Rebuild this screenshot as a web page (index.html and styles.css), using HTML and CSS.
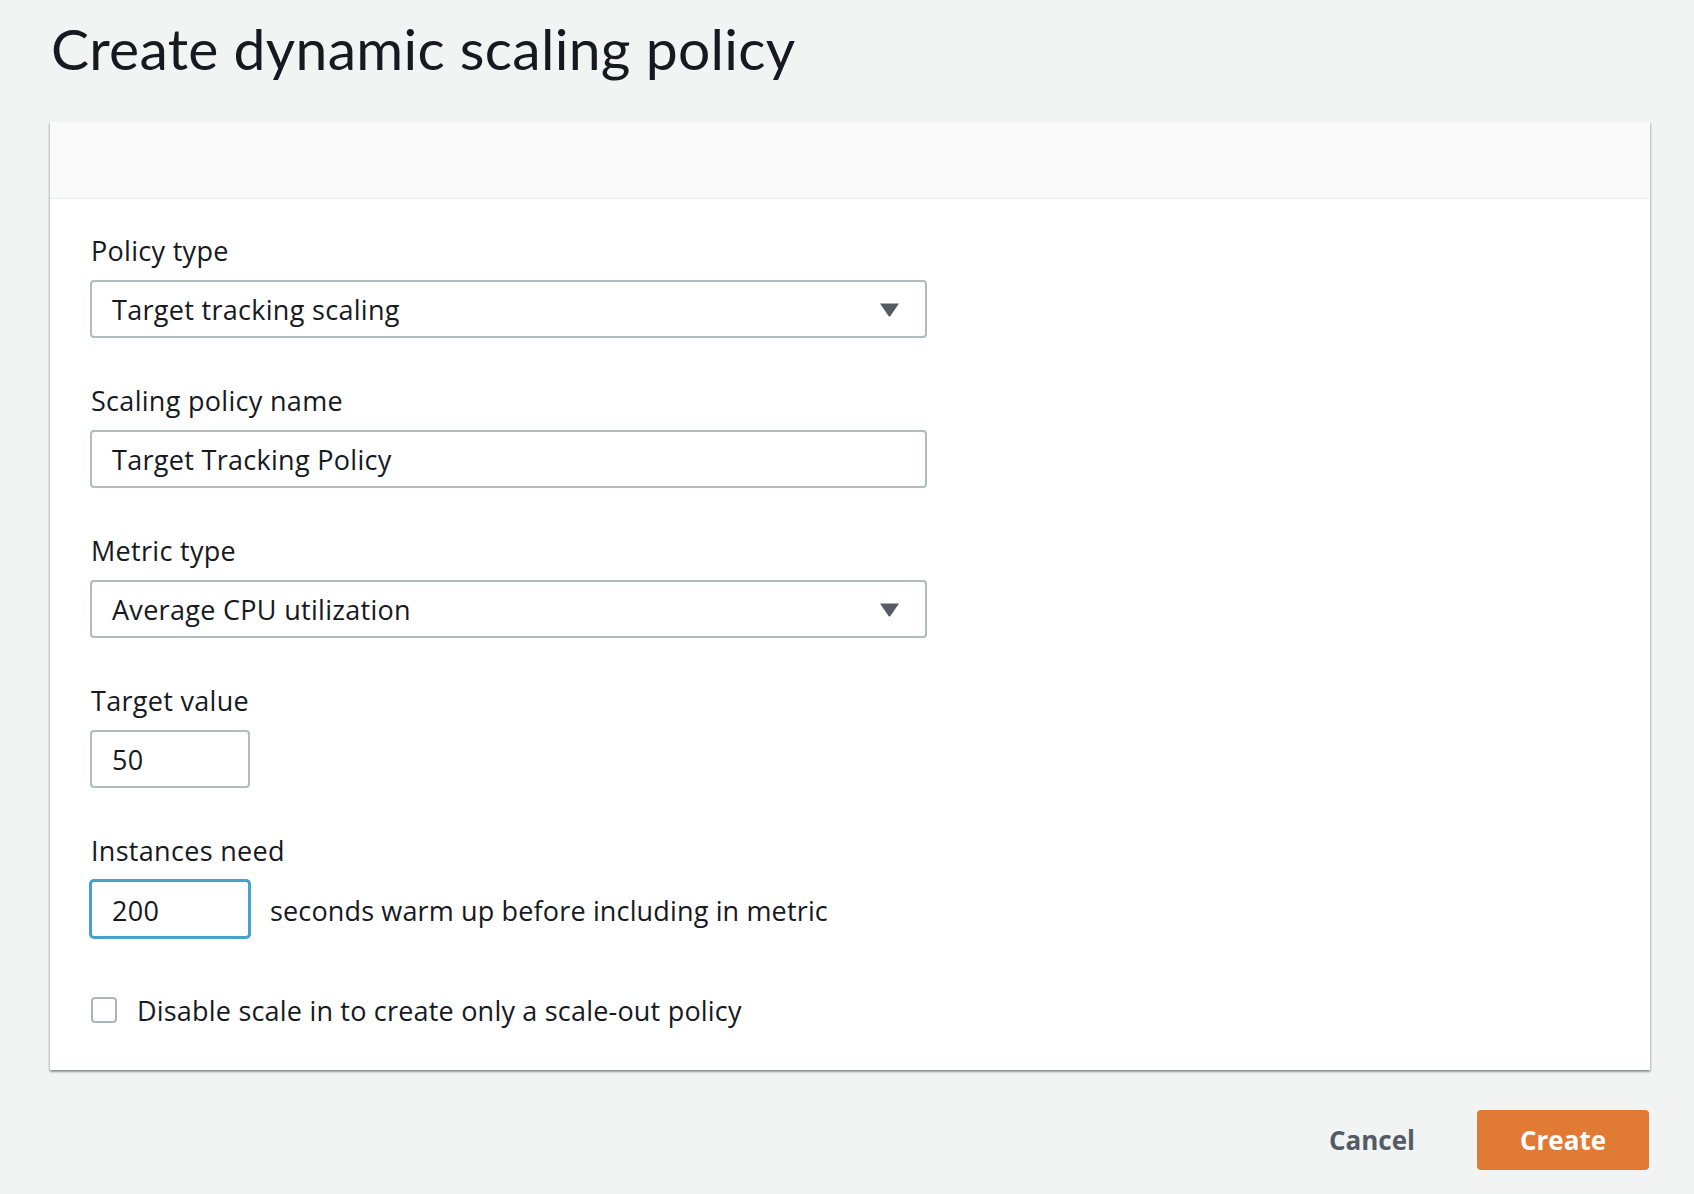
FILE: index.html
```html
<!DOCTYPE html>
<html lang="en">
<head>
<meta charset="utf-8">
<title>Create dynamic scaling policy</title>
<link rel="stylesheet" href="styles.css">
</head>
<body>
<main class="page">
  <h1 class="title">Create dynamic scaling policy</h1>
  <section class="card">
    <div class="card-header"></div>
    <div class="card-body">
      <div class="field">
        <div class="label">Policy type</div>
        <div class="control select">
          <span class="value">Target tracking scaling</span>
          <svg class="caret" width="21" height="15" viewBox="0 0 21 15"><path d="M1 1.5 H20 L11.4 14 Q10.5 15 9.6 14 Z" fill="#545b64"/></svg>
        </div>
      </div>
      <div class="field">
        <div class="label">Scaling policy name</div>
        <div class="control"><span class="value">Target Tracking Policy</span></div>
      </div>
      <div class="field">
        <div class="label">Metric type</div>
        <div class="control select">
          <span class="value">Average CPU utilization</span>
          <svg class="caret" width="21" height="15" viewBox="0 0 21 15"><path d="M1 1.5 H20 L11.4 14 Q10.5 15 9.6 14 Z" fill="#545b64"/></svg>
        </div>
      </div>
      <div class="field">
        <div class="label">Target value</div>
        <div class="control small"><span class="value">50</span></div>
      </div>
      <div class="field">
        <div class="label">Instances need</div>
        <div class="inline">
          <div class="control small focused"><span class="value">200</span></div>
          <span class="suffix">seconds warm up before including in metric</span>
        </div>
      </div>
      <label class="check-row">
        <span class="checkbox"></span>
        <span class="check-label">Disable scale in to create only a scale-out policy</span>
      </label>
    </div>
  </section>
  <div class="actions">
    <button class="btn-link">Cancel</button>
    <button class="btn-primary">Create</button>
  </div>
</main>
</body>
</html>
```
FILE: styles.css
```css
* { box-sizing: border-box; }
html, body { margin: 0; padding: 0; }
body {
  background: #f2f3f3;
  color: #16191f;
  font-family: "Open Sans", "Noto Sans", Arial, sans-serif;
}
.page {
  padding: 15px 44px 0 50px;
}
.title {
  margin: 0 0 40px 0;
  font-family: Lato, "Open Sans", Arial, sans-serif;
  font-size: 57px;
  line-height: 67px;
  font-weight: 400;
  letter-spacing: 0.3px;
  padding-left: 1px;
}
.card {
  background: #ffffff;
  box-shadow: 0 2px 2px 0 rgba(0, 28, 36, 0.3), 1px 1px 2px 0 rgba(0, 28, 36, 0.15), -1px 1px 2px 0 rgba(0, 28, 36, 0.15);
}
.card-header {
  height: 77px;
  background: #fafafa;
  border-bottom: 1px solid #eaeded;
}
.card-body {
  padding: 34px 40px 42px 40px;
  display: flex;
  flex-direction: column;
  font-size: 27px;
  letter-spacing: 0.3px;
}
.field {
  display: flex;
  flex-direction: column;
  gap: 11px;
  margin-bottom: 45px;
}
.label {
  line-height: 36px;
  padding-left: 1px;
}
.control {
  width: 837px;
  height: 58px;
  border: 2px solid #b0bcbd;
  border-radius: 4px;
  background: #fff;
  display: flex;
  align-items: center;
  padding: 0 20px;
}
.control.small { width: 160px; }
.control.focused {
  border: 2px solid #44a3c8;
  box-shadow: 0 0 0 1px #44a3c8;
  padding-top: 2px;
}
.select {
  justify-content: space-between;
  padding-right: 25px;
}
.caret { display: block; }
.inline {
  display: flex;
  align-items: center;
  gap: 20px;
}
.suffix {
  letter-spacing: 0.15px;
  padding-top: 2px;
}
.check-row {
  display: flex;
  align-items: center;
  gap: 20px;
  margin-top: 9px;
  height: 36px;
}
.checkbox {
  width: 26px;
  height: 26px;
  border: 2px solid #aab7b8;
  border-radius: 4px;
  background: #fff;
  margin-left: 1px;
}
.check-label { letter-spacing: 0.2px; }
.actions {
  display: flex;
  justify-content: flex-end;
  align-items: center;
  margin-top: 40px;
  gap: 40px;
  padding-right: 1px;
}
.btn-link {
  background: none;
  border: none;
  font-family: inherit;
  font-weight: 700;
  font-size: 26px;
  color: #545b64;
  padding: 0 22px;
  height: 60px;
}
.btn-primary {
  width: 172px;
  height: 60px;
  background: #e07a35;
  border: none;
  border-radius: 4px;
  color: #fff;
  font-family: inherit;
  font-weight: 700;
  font-size: 26px;
}
```
